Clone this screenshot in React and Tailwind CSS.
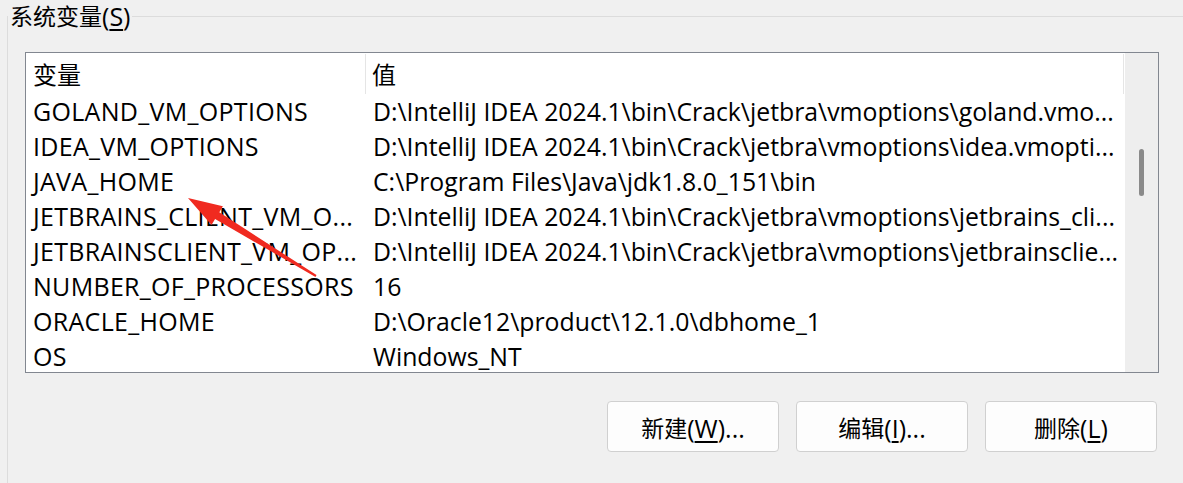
import React from "react";

const rows = [
  ["GOLAND_VM_OPTIONS", "D:\\IntelliJ IDEA 2024.1\\bin\\Crack\\jetbra\\vmoptions\\goland.vmo..."],
  ["IDEA_VM_OPTIONS", "D:\\IntelliJ IDEA 2024.1\\bin\\Crack\\jetbra\\vmoptions\\idea.vmopti..."],
  ["JAVA_HOME", "C:\\Program Files\\Java\\jdk1.8.0_151\\bin"],
  ["JETBRAINS_CLIENT_VM_O...", "D:\\IntelliJ IDEA 2024.1\\bin\\Crack\\jetbra\\vmoptions\\jetbrains_cli..."],
  ["JETBRAINSCLIENT_VM_OP...", "D:\\IntelliJ IDEA 2024.1\\bin\\Crack\\jetbra\\vmoptions\\jetbrainsclie..."],
  ["NUMBER_OF_PROCESSORS", "16"],
  ["ORACLE_HOME", "D:\\Oracle12\\product\\12.1.0\\dbhome_1"],
  ["OS", "Windows_NT"],
];

function Btn({ label, u, after }) {
  return (
    <button className="w-[172px] h-[51px] pt-[3px] rounded-[4px] border border-[#d0d0d0] bg-[#fdfdfd] text-[23px] text-black flex items-center justify-center leading-none">
      {label}
      <span className="text-[25px]">
        (<span className="underline underline-offset-[3px]">{u}</span>){after}
      </span>
    </button>
  );
}

export default function App() {
  return (
    <div className="relative w-[1183px] h-[483px] bg-[#f0f0f0] overflow-hidden text-black font-['Open_Sans','Noto_Sans_CJK_SC',sans-serif]">
      {/* group box */}
      <div className="absolute left-[7px] top-[16px] w-[1200px] h-[500px] border border-[#dcdcdc]" />
      <div className="relative pt-[1px] pl-[8px] h-[30px] flex items-start">
        <div className="bg-[#f0f0f0] px-[2px] flex items-center h-[30px] text-[23px] leading-[30px]">
          <span>系统变量</span>
          <span className="text-[25px] leading-[30px]">
            (<span className="underline underline-offset-[3px]">S</span>)
          </span>
        </div>
      </div>

      {/* list */}
      <div className="relative mt-[22px] ml-[25px] w-[1134px] h-[321px] border border-[#828790] bg-white flex overflow-hidden">
        <div className="flex-1 min-w-0 flex flex-col text-[25px] pt-[1px]">
          <div className="h-[40px] flex shrink-0 text-[24px]">
            <div className="w-[340px] pl-[7px] pt-[2px] flex items-center border-r border-[#e5e5e5]">变量</div>
            <div className="flex-1 pl-[6px] pt-[2px] flex items-center border-r border-[#e5e5e5]">值</div>
          </div>
          {rows.map(([k, v]) => (
            <div key={k} className="h-[35px] shrink-0 flex items-center">
              <div className="w-[340px] shrink-0 pl-[7px] whitespace-nowrap overflow-hidden tracking-[0.3px]">{k}</div>
              <div className="flex-1 min-w-0 pl-[7px] pr-[6px] whitespace-nowrap overflow-hidden text-[24.8px]">{v}</div>
            </div>
          ))}
        </div>
        <div className="w-[34px] shrink-0 bg-[#eeeeee] border-l border-white flex justify-center">
          <div className="mt-[96px] w-[5px] h-[47px] rounded-full bg-[#8a8a8a]" />
        </div>
      </div>

      {/* buttons */}
      <div className="relative mt-[28px] flex justify-end gap-[17px] pr-[26px]">
        <Btn label="新建" u="W" after="..." />
        <Btn label="编辑" u="I" after="..." />
        <Btn label="删除" u="L" after="" />
      </div>

      {/* red arrow annotation */}
      <svg className="absolute left-0 top-0 pointer-events-none" width="1183" height="483">
        <polygon
          points="188,198 222.9,206.3 219.3,212.3 316.5,275.1 315.5,276.9 215.1,219.1 211.5,225.1"
          fill="#f02a20"
        />
      </svg>
    </div>
  );
}
